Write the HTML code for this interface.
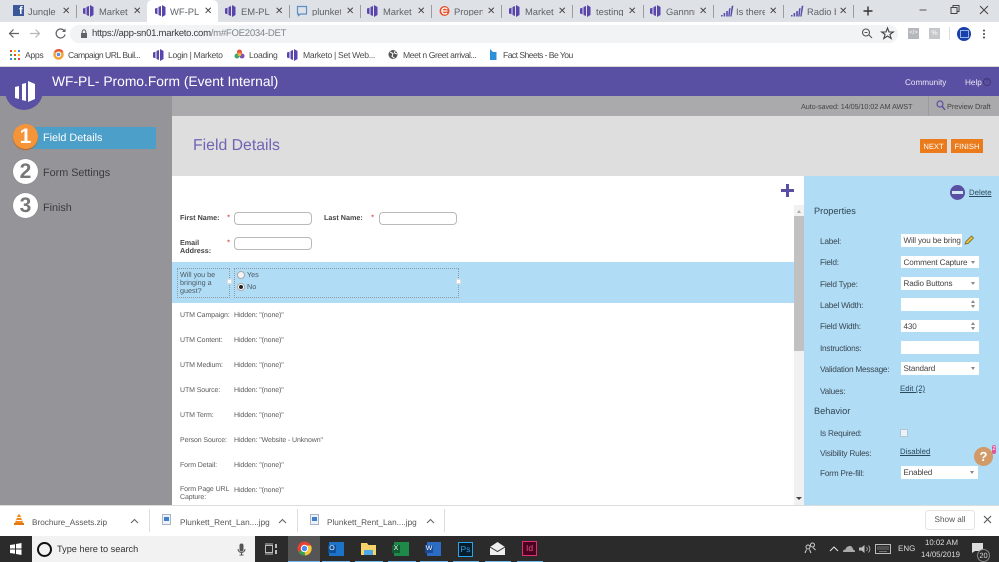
<!DOCTYPE html>
<html><head><meta charset="utf-8"><title>WF-PL- Promo.Form</title>
<style>
html,body{margin:0;padding:0}
body{width:999px;height:562px;position:relative;overflow:hidden;background:#fff;font-family:"Liberation Sans",sans-serif;color:#444;text-rendering:geometricPrecision}
.a,.t{position:absolute}
.t{white-space:nowrap;line-height:1}
.tabtxt{font-size:9.4px;color:#5f6368;top:7px;width:29px;overflow:hidden}
.x{font-size:10px;color:#444;top:7px}
.sep{position:absolute;top:5px;width:1px;height:13px;background:#9a9ca0}
.bm{font-size:8.6px;letter-spacing:-.3px;color:#4a4a4a;top:51px}
.f1{font-size:7.2px;font-weight:bold;color:#444}
.f2{font-size:7px;letter-spacing:-.1px;color:#5a5a5a}
.in{position:absolute;background:#fff;border:1px solid #b9b9b9;border-radius:4px;width:76px;height:11px;box-sizing:content-box}
.pl{font-size:8.300px;letter-spacing:-.25px;color:#3c4a55;left:820px}
.pi{position:absolute;left:900.500px;width:78.500px;height:12.700px;background:#fff;font-size:8.100px;letter-spacing:-.15px;color:#444;line-height:13px;text-indent:3px;white-space:nowrap;overflow:hidden}
.dd:after{content:"";position:absolute;right:4px;top:5px;border-left:2.500px solid transparent;border-right:2.500px solid transparent;border-top:3px solid #888}
.sp:after{content:"";position:absolute;right:4px;top:2px;border-left:2.500px solid transparent;border-right:2.500px solid transparent;border-bottom:3px solid #888}
.sp:before{content:"";position:absolute;right:4px;top:7px;border-left:2.500px solid transparent;border-right:2.500px solid transparent;border-top:3px solid #888}
.lnk{font-size:7.800px;color:#2b4a5e;text-decoration:underline}
.circ{position:absolute;left:13px;width:25px;height:25px;border-radius:50%;background:#fff;box-shadow:0 0 1px #777;color:#777;font-weight:bold;font-size:21px;line-height:25px;text-align:center}
.stp{font-size:10.800px;left:43px;color:#3a3a3a}
.tb{position:absolute;bottom:0;height:1px;background:#76b9ed}
svg{position:absolute;overflow:visible}
</style></head><body>

<!-- tab strip -->
<div class="a" style="left:0;top:0;width:999px;height:22px;background:#dee1e6"></div>
<div class="a" style="left:147px;top:0;width:71px;height:22px;background:#fff;border-radius:5px 5px 0 0"></div>
<div class="a" style="left:13px;top:5px;width:11px;height:11px;background:#3b5998"></div>
<div class="t" style="left:19px;top:6px;font-size:11px;font-weight:bold;color:#fff">f</div>
<svg width="0" height="0"><defs><g id="m"><path d="M0 3.500L2.500 2.700V9.300L0 8.500Z M3.500 2V10L6 11V1Z M7 0V12L10.500 10V2Z" fill="#5a45ad"/></g><g id="s"><path d="M0 10h1.600v1.500H0Z M2.600 8h1.600v3.500H2.600Z M5.200 6h1.600v5.500H5.200Z M8 3.500l1.600-.5-1 8.500H7.200Z M10.700 1l1.700-.5-1.800 11H9.200Z" fill="#5a4fa8"/></g></defs></svg>
<svg style="left:83px;top:5px" width="11" height="12"><use href="#m"/></svg>
<svg style="left:155px;top:5px" width="11" height="12"><use href="#m"/></svg>
<svg style="left:225px;top:5px" width="11" height="12"><use href="#m"/></svg>
<svg style="left:296px;top:5px" width="12" height="12"><path d="M1.500 1.500H10.500V9H4.500L2.500 10.500V9H1.500Z" fill="none" stroke="#5b8fc9" stroke-width="1.200"/></svg>
<svg style="left:367px;top:5px" width="11" height="12"><use href="#m"/></svg>
<svg style="left:439px;top:5px" width="12" height="12"><circle cx="5.500" cy="6" r="5" fill="#e8502a"/><path d="M2.500 6H8.500M8.300 4.300A3 3 0 1 0 8 8" fill="none" stroke="#fff" stroke-width="1.300"/></svg>
<svg style="left:509px;top:5px" width="11" height="12"><use href="#m"/></svg>
<svg style="left:580px;top:5px" width="11" height="12"><use href="#m"/></svg>
<svg style="left:650px;top:5px" width="11" height="12"><use href="#m"/></svg>
<svg style="left:721px;top:5px" width="13" height="12"><use href="#s"/></svg>
<svg style="left:791px;top:5px" width="13" height="12"><use href="#s"/></svg>

<div class="t tabtxt" style="left:28px">Jungle S</div><div class="t x" style="left:62px">✕</div>
<div class="t tabtxt" style="left:99px">Marketo</div><div class="t x" style="left:133px">✕</div>
<div class="t tabtxt" style="left:170px">WF-PL-</div><div class="t x" style="left:204px">✕</div>
<div class="t tabtxt" style="left:241px">EM-PL-2</div><div class="t x" style="left:275px">✕</div>
<div class="t tabtxt" style="left:312px">plunkett</div><div class="t x" style="left:346px">✕</div>
<div class="t tabtxt" style="left:383px">Marketo</div><div class="t x" style="left:417px">✕</div>
<div class="t tabtxt" style="left:454px">Property</div><div class="t x" style="left:487px">✕</div>
<div class="t tabtxt" style="left:525px">Marketo</div><div class="t x" style="left:558px">✕</div>
<div class="t tabtxt" style="left:596px">testing c</div><div class="t x" style="left:628px">✕</div>
<div class="t tabtxt" style="left:666px">Gannnn</div><div class="t x" style="left:699px">✕</div>
<div class="t tabtxt" style="left:736px">Is there</div><div class="t x" style="left:769px">✕</div>
<div class="t tabtxt" style="left:807px">Radio bu</div><div class="t x" style="left:839px">✕</div>
<div class="sep" style="left:76px"></div><div class="sep" style="left:289px"></div><div class="sep" style="left:360px"></div><div class="sep" style="left:431px"></div><div class="sep" style="left:501px"></div><div class="sep" style="left:572px"></div><div class="sep" style="left:643px"></div><div class="sep" style="left:713px"></div><div class="sep" style="left:783px"></div><div class="sep" style="left:853px"></div>
<svg style="left:862px;top:5px" width="12" height="12"><path d="M6 1.500V10.500M1.500 6H10.500" stroke="#333" stroke-width="1.400"/></svg>
<svg style="left:920px;top:4px" width="70" height="14"><path d="M-.5 6H6.500" stroke="#555"/><path d="M31 3.500H37V9.500H31ZM33 3.500V1.500H39V7.500H37" fill="none" stroke="#444"/><path d="M60 2L68 10M68 2L60 10" stroke="#444"/></svg>

<!-- address bar -->
<div class="a" style="left:70px;top:25px;width:828px;height:18px;border-radius:9px;background:#f1f3f4"></div>
<svg style="left:8px;top:27px" width="60" height="13"><path d="M11 6.500H1.500M5.500 2.500L1.500 6.500L5.500 10.500" fill="none" stroke="#5f6368" stroke-width="1.200"/><path d="M29 6.500H38.500M34.500 2.500L38.500 6.500L34.500 10.500" fill="none" stroke="#b5b7ba" stroke-width="1.200" transform="translate(-7 0)"/><path d="M56 3.500A4.500 4.500 0 1 0 57 7.500" fill="none" stroke="#5f6368" stroke-width="1.200"/><path d="M57.500 1.500V5H54Z" fill="#5f6368"/></svg>
<svg style="left:80px;top:29px" width="8" height="10"><rect x="1" y="4" width="6" height="5" fill="#5f6368"/><path d="M2.200 4V2.700A1.800 1.800 0 0 1 5.800 2.700V4" fill="none" stroke="#5f6368"/></svg>
<div class="t" style="left:92px;top:29px;font-size:9.600px;letter-spacing:-.29px;color:#3c4043">https://app-sn01.marketo.com<span style="color:#80868b">/m#FOE2034-DET</span></div>
<svg style="left:861px;top:27px" width="35" height="13"><circle cx="5" cy="5.500" r="3.500" fill="none" stroke="#555" stroke-width="1.100"/><path d="M8 8L11 11M3.500 5.500H6.500" stroke="#555" stroke-width="1.100"/><path d="M26.500 1L28 5H32.300L28.900 7.500L30.200 11.500L26.500 9L22.800 11.500L24.100 7.500L20.700 5H25Z" fill="none" stroke="#444" stroke-width="1.100"/></svg>
<div class="a" style="left:908px;top:28px;width:11px;height:11px;background:#b4b7bb;color:#fff;font-size:6px;line-height:11px;text-align:center">&lt;/&gt;</div>
<div class="a" style="left:929px;top:28px;width:11px;height:11px;background:#c5c7ca;color:#fff;font-size:7px;line-height:11px;text-align:center">%</div>
<div class="a" style="left:949px;top:27px;width:1px;height:13px;background:#dadce0"></div>
<div class="a" style="left:957px;top:27px;width:14px;height:14px;border-radius:50%;background:#1b3fa8"></div>
<div class="a" style="left:960px;top:30px;width:7px;height:6px;border:1px solid #8fb4e8"></div>
<svg style="left:982px;top:29px" width="4" height="11"><circle cx="2" cy="1.500" r="1" fill="#444"/><circle cx="2" cy="5" r="1" fill="#444"/><circle cx="2" cy="8.500" r="1" fill="#444"/></svg>

<!-- bookmarks -->
<svg style="left:10px;top:50px" width="10" height="10"><g><rect x="0" y="0" width="2" height="2" fill="#ea4335"/><rect x="4" y="0" width="2" height="2" fill="#fbbc05"/><rect x="8" y="0" width="2" height="2" fill="#4285f4"/><rect x="0" y="4" width="2" height="2" fill="#34a853"/><rect x="4" y="4" width="2" height="2" fill="#ea4335"/><rect x="8" y="4" width="2" height="2" fill="#fbbc05"/><rect x="0" y="8" width="2" height="2" fill="#4285f4"/><rect x="4" y="8" width="2" height="2" fill="#34a853"/><rect x="8" y="8" width="2" height="2" fill="#ea4335"/></g></svg>
<div class="t bm" style="left:25px">Apps</div>
<svg style="left:53px;top:49px" width="11" height="11"><circle cx="5.500" cy="5.500" r="4" fill="#fff" stroke="#f2a33a" stroke-width="2.500"/><path d="M2 3A4.500 4.500 0 0 1 9.500 3" fill="none" stroke="#e8553d" stroke-width="2"/><circle cx="5.500" cy="5.500" r="1.800" fill="#5b8de8"/></svg>
<div class="t bm" style="left:68px;letter-spacing:-.5px">Campaign URL Buil...</div>
<svg style="left:153px;top:49px" width="11" height="12"><use href="#m"/></svg>
<div class="t bm" style="left:168px">Login | Marketo</div>
<svg style="left:234px;top:49px" width="11" height="11"><circle cx="5.500" cy="3" r="2.500" fill="#e8553d"/><circle cx="3" cy="7" r="2.500" fill="#3aa76d"/><circle cx="8" cy="7" r="2.500" fill="#7b4fb5"/><circle cx="5.500" cy="5.500" r="1.800" fill="#f3b13c"/></svg>
<div class="t bm" style="left:249px">Loading</div>
<svg style="left:287px;top:49px" width="11" height="12"><use href="#m"/></svg>
<div class="t bm" style="left:303px">Marketo | Set Web...</div>
<svg style="left:388px;top:49px" width="11" height="11"><circle cx="5" cy="5.500" r="4.500" fill="#555"/><path d="M2 3L5 4.500 4 7.500 6.500 9M7 2L6.500 4 9 5" fill="none" stroke="#fff"/></svg>
<div class="t bm" style="left:403px;letter-spacing:-.42px">Meet n Greet arrival...</div>
<svg style="left:489px;top:49px" width="9" height="12"><path d="M1 0L4 3H7.500V11H1Z" fill="#2b90d9"/></svg>
<div class="t bm" style="left:503px;letter-spacing:-.55px">Fact Sheets - Be You</div>
<div class="a" style="left:0;top:66px;width:999px;height:1px;background:#d8d8d8"></div>

<!-- app header -->
<div class="a" style="left:0;top:67px;width:999px;height:29px;background:#5a50a3"></div>
<div class="a" style="left:0;top:96px;width:172px;height:409px;background:#959499"></div>
<div class="a" style="left:172px;top:96px;width:827px;height:20px;background:#aaaaad"></div>
<div class="a" style="left:5px;top:72px;width:38px;height:38px;border-radius:50%;background:#5a50a3"></div>
<svg style="left:15px;top:81px" width="20" height="21"><path d="M0 6L4 5V18L0 17Z M7 3L11 2V20L7 19Z M13 0L20 3V18L13 21Z" fill="#fff"/></svg>
<div class="t" style="left:52px;top:75px;font-size:13.800px;color:#fff">WF-PL- Promo.Form (Event Internal)</div>
<div class="t" style="left:905px;top:78.500px;font-size:8.200px;color:#e8e6f5">Community</div>
<div class="t" style="left:965px;top:78.500px;font-size:8.200px;color:#e8e6f5">Help</div>
<div class="a" style="left:983px;top:78px;width:6px;height:6px;border:1px solid #3f3a75;border-radius:50%;font-size:6px;line-height:6px;text-align:center;color:#3f3a75">?</div>
<div class="t" style="left:801px;top:103px;font-size:7.300px;letter-spacing:-.1px;color:#444">Auto-saved: 14/05/10:02 AM AWST</div>
<div class="a" style="left:928px;top:96px;width:1px;height:20px;background:#9c9c9f"></div>
<svg style="left:936px;top:100px" width="10" height="11"><circle cx="4" cy="4" r="3" fill="none" stroke="#5a50a3" stroke-width="1.200"/><path d="M6.200 6.500L9 9.800" stroke="#5a50a3" stroke-width="1.500"/></svg>
<div class="t" style="left:947px;top:103px;font-size:7.400px;letter-spacing:-.05px;color:#444">Preview Draft</div>

<!-- sidebar -->
<div class="a" style="left:26px;top:127px;width:130px;height:22px;background:#4c9fc8"></div>
<div class="circ" style="top:124px;background:#f6943a;color:#fff;box-shadow:0 1px 1px #b5651d">1</div>
<div class="t stp" style="top:133px;color:#fff">Field Details</div>
<div class="circ" style="top:159px">2</div>
<div class="t stp" style="top:168px">Form Settings</div>
<div class="circ" style="top:193px">3</div>
<div class="t stp" style="top:203px">Finish</div>

<!-- title -->
<div class="a" style="left:172px;top:116px;width:827px;height:60px;background:#dedede"></div>
<div class="t" style="left:193px;top:138px;font-size:15.800px;color:#7064b5">Field Details</div>
<div class="a" style="left:920px;top:139px;width:27px;height:14px;background:#ea7a1a;color:#fff;font-size:7.600px;line-height:15px;text-align:center">NEXT</div>
<div class="a" style="left:951px;top:139px;width:32px;height:14px;background:#ea7a1a;color:#fff;font-size:7.600px;line-height:15px;text-align:center">FINISH</div>

<!-- form -->
<div class="a" style="left:172px;top:176px;width:632px;height:329px;background:#fff"></div>
<svg style="left:781px;top:184px" width="13" height="13"><path d="M6.500 0V13M0 6.500H13" stroke="#5a50a3" stroke-width="3"/></svg>
<div class="a" style="left:794px;top:205px;width:10px;height:300px;background:#f1f1f1"></div>
<div class="a" style="left:794px;top:216px;width:10px;height:135px;background:#c1c1c1"></div>
<div class="a" style="left:797px;top:210px;border-left:2.500px solid transparent;border-right:2.500px solid transparent;border-bottom:3px solid #aaa"></div>
<div class="a" style="left:796px;top:497px;border-left:3px solid transparent;border-right:3px solid transparent;border-top:3px solid #444"></div>

<div class="t f1" style="left:180px;top:214px">First Name:</div>
<div class="t" style="left:227px;top:214px;font-size:8px;color:#d33">*</div>
<div class="in" style="left:234px;top:211.500px"></div>
<div class="t f1" style="left:324px;top:214px">Last Name:</div>
<div class="t" style="left:371px;top:214px;font-size:8px;color:#d33">*</div>
<div class="in" style="left:379px;top:211.500px"></div>
<div class="t f1" style="left:180px;top:239px;line-height:8px">Email<br>Address:</div>
<div class="t" style="left:227px;top:239px;font-size:8px;color:#d33">*</div>
<div class="in" style="left:234px;top:236.500px"></div>

<div class="a" style="left:172px;top:262px;width:622px;height:41px;background:#b0dcf5"></div>
<div class="a" style="left:177px;top:268px;width:51px;height:28px;border:1px dotted #8d9aa3"></div>
<div class="a" style="left:234px;top:268px;width:223px;height:28px;border:1px dotted #8d9aa3"></div>
<div class="t" style="left:180px;top:271px;font-size:7.200px;line-height:8px;color:#4d5a63">Will you be<br>bringing a<br>guest?</div>
<div class="a" style="left:227px;top:279px;width:3px;height:3px;background:#fff;border:1px solid #ddd"></div>
<div class="a" style="left:456px;top:279px;width:3px;height:3px;background:#fff;border:1px solid #ddd"></div>
<div class="a" style="left:237px;top:271px;width:6px;height:6px;border-radius:50%;background:#f4f4f4;border:1px solid #aaa"></div>
<div class="t" style="left:247px;top:271px;font-size:7.200px;color:#4d5a63">Yes</div>
<div class="a" style="left:237px;top:283px;width:6px;height:6px;border-radius:50%;background:#fff;border:1px solid #aaa"></div>
<div class="a" style="left:239px;top:285px;width:4px;height:4px;border-radius:50%;background:#222"></div>
<div class="t" style="left:247px;top:283px;font-size:7.200px;color:#4d5a63">No</div>

<div class="t f2" style="left:180px;top:312px">UTM Campaign:</div><div class="t f2" style="left:234px;top:312px">Hidden: "(none)"</div>
<div class="t f2" style="left:180px;top:337px">UTM Content:</div><div class="t f2" style="left:234px;top:337px">Hidden: "(none)"</div>
<div class="t f2" style="left:180px;top:362px">UTM Medium:</div><div class="t f2" style="left:234px;top:362px">Hidden: "(none)"</div>
<div class="t f2" style="left:180px;top:387px">UTM Source:</div><div class="t f2" style="left:234px;top:387px">Hidden: "(none)"</div>
<div class="t f2" style="left:180px;top:412px">UTM Term:</div><div class="t f2" style="left:234px;top:412px">Hidden: "(none)"</div>
<div class="t f2" style="left:180px;top:437px">Person Source:</div><div class="t f2" style="left:234px;top:437px">Hidden: "Website - Unknown"</div>
<div class="t f2" style="left:180px;top:462px">Form Detail:</div><div class="t f2" style="left:234px;top:462px">Hidden: "(none)"</div>
<div class="t f2" style="left:180px;top:486px;line-height:8px">Form Page URL<br>Capture:</div><div class="t f2" style="left:234px;top:487px">Hidden: "(none)"</div>

<!-- right panel -->
<div class="a" style="left:804px;top:176px;width:195px;height:329px;background:#b0dcf5"></div>
<div class="a" style="left:950px;top:185px;width:15px;height:15px;border-radius:50%;background:#5a50a3"></div>
<div class="a" style="left:952px;top:191px;width:11px;height:3px;background:#cfe6f5"></div>
<div class="t lnk" style="left:969px;top:189px">Delete</div>
<div class="t" style="left:814px;top:207px;font-size:9.200px;color:#2f4552">Properties</div>
<div class="t pl" style="top:237px">Label:</div>
<div class="pi" style="top:234px;width:61.500px">Will you be bring</div>
<svg style="left:964px;top:235px" width="10" height="10"><path d="M1 9L2 6.500 7.500 1 9.500 3 4 8.500Z" fill="#e8c23a" stroke="#6b5b1e" stroke-width=".7"/></svg>
<div class="t pl" style="top:258px">Field:</div>
<div class="pi dd" style="top:255.500px">Comment Capture</div>
<div class="t pl" style="top:280px">Field Type:</div>
<div class="pi dd" style="top:277px">Radio Buttons</div>
<div class="t pl" style="top:301px">Label Width:</div>
<div class="pi sp" style="top:298px"></div>
<div class="t pl" style="top:322px">Field Width:</div>
<div class="pi sp" style="top:319.500px">430</div>
<div class="t pl" style="top:344px">Instructions:</div>
<div class="pi" style="top:341px"></div>
<div class="t pl" style="top:365px">Validation Message:</div>
<div class="pi dd" style="top:362px">Standard</div>
<div class="t pl" style="top:387px">Values:</div>
<div class="t lnk" style="left:900px;top:385px">Edit (2)</div>
<div class="t" style="left:814px;top:407px;font-size:9.200px;color:#2f4552">Behavior</div>
<div class="t pl" style="top:429px">Is Required:</div>
<div class="a" style="left:900px;top:429px;width:6px;height:6px;background:#e8f3fa;border:1px solid #b5c5cf;border-radius:1px"></div>
<div class="t pl" style="top:449px">Visibility Rules:</div>
<div class="t lnk" style="left:900px;top:448px">Disabled</div>
<div class="t pl" style="top:469px">Form Pre-fill:</div>
<div class="pi dd" style="top:466px;width:77px">Enabled</div>
<div class="a" style="left:974px;top:447px;width:19px;height:19px;border-radius:50%;background:#d19a68;color:#fff;font-weight:bold;font-size:13px;line-height:19px;text-align:center">?</div>
<div class="a" style="left:992px;top:445px;width:4px;height:9px;border-radius:2px;background:#e0569b;color:#fff;font-size:6px;line-height:9px;text-align:center">2</div>

<!-- downloads -->
<div class="a" style="left:0;top:505px;width:999px;height:31px;background:#fff;border-top:1px solid #dcdcdc;box-sizing:border-box"></div>
<svg style="left:13px;top:514px" width="12" height="12"><path d="M5 0.500H7L10 9H2Z" fill="#f08a1d"/><path d="M4.200 3.500H7.800M3.300 6.500H8.700" stroke="#fff"/><rect x="1" y="9" width="10" height="2" fill="#e07a10"/></svg>
<div class="t" style="left:32px;top:519px;font-size:8.200px;color:#555">Brochure_Assets.zip</div>
<svg style="left:130px;top:518px" width="9" height="6"><path d="M1 5L4.500 1.500L8 5" fill="none" stroke="#666" stroke-width="1.100"/></svg>
<div class="a" style="left:149px;top:509px;width:1px;height:23px;background:#dcdcdc"></div>
<svg style="left:162px;top:514px" width="9" height="12"><path d="M.5.500H8.500V10.500H.5Z" fill="#eef2f8" stroke="#aab4c5"/><rect x="2" y="3" width="5" height="4" fill="#3f7fd0"/></svg>
<div class="t" style="left:180px;top:519px;font-size:8.200px;color:#555">Plunkett_Rent_Lan....jpg</div>
<svg style="left:278px;top:518px" width="9" height="6"><path d="M1 5L4.500 1.500L8 5" fill="none" stroke="#666" stroke-width="1.100"/></svg>
<div class="a" style="left:297px;top:509px;width:1px;height:23px;background:#dcdcdc"></div>
<svg style="left:310px;top:514px" width="9" height="12"><path d="M.5.500H8.500V10.500H.5Z" fill="#eef2f8" stroke="#aab4c5"/><rect x="2" y="3" width="5" height="4" fill="#3f7fd0"/></svg>
<div class="t" style="left:327px;top:519px;font-size:8.200px;color:#555">Plunkett_Rent_Lan....jpg</div>
<svg style="left:426px;top:518px" width="9" height="6"><path d="M1 5L4.500 1.500L8 5" fill="none" stroke="#666" stroke-width="1.100"/></svg>
<div class="a" style="left:444px;top:509px;width:1px;height:23px;background:#dcdcdc"></div>
<div class="a" style="left:925px;top:510px;width:50px;height:20px;box-sizing:border-box;border:1px solid #e3e3e3;border-radius:3px;background:#fff;color:#555;font-size:8.200px;line-height:18px;text-align:center">Show all</div>
<svg style="left:983px;top:515px" width="9" height="9"><path d="M1 1L8 8M8 1L1 8" stroke="#555" stroke-width="1.100"/></svg>

<!-- taskbar -->
<div class="a" style="left:0;top:536px;width:999px;height:26px;background:#2b2b2b"></div>
<svg style="left:10px;top:543px" width="12" height="12"><path d="M0 2L5 1.200V5.500H0ZM6 1L11.500 0V5.500H6ZM0 6.500H5V10.800L0 10ZM6 6.500H11.500V12L6 11Z" fill="#fff"/></svg>
<div class="a" style="left:32px;top:536px;width:223px;height:26px;background:#f2f2f2"></div>
<div class="a" style="left:37px;top:542px;width:11px;height:11px;border:2px solid #111;border-radius:50%"></div>
<div class="t" style="left:57px;top:545px;font-size:9.200px;color:#333">Type here to search</div>
<svg style="left:237px;top:543px" width="9" height="13"><rect x="2.500" y="0.500" width="4" height="8" rx="2" fill="#555"/><path d="M1 6A3.500 3.500 0 0 0 8 6M4.500 9.500V12M2.500 12H6.500" fill="none" stroke="#555"/></svg>
<svg style="left:265px;top:544px" width="12" height="10"><path d="M.5 1.500H7.500V8.500H.5ZM0 0H8M0 10H8" fill="none" stroke="#bbb"/><path d="M10 0H12V4H10ZM10 6H12V10H10Z" fill="#bbb"/></svg>
<div class="a" style="left:288px;top:536px;width:32px;height:26px;background:#555"></div>
<svg style="left:297px;top:541px" width="15" height="15"><circle cx="7.500" cy="7.500" r="7" fill="#e34133"/><path d="M7.500 7.500L1.500 11A7 7 0 0 0 11 13.500Z" fill="#2fa350"/><path d="M7.500 4.500H14A7 7 0 0 1 8 14.500Z" fill="#f8c43a"/><circle cx="7.500" cy="7.500" r="3.200" fill="#4a8af0" stroke="#fff"/></svg>
<div class="a" style="left:329px;top:542px;width:15px;height:14px;background:#1b74c8"></div>
<div class="a" style="left:328px;top:545px;width:8px;height:8px;background:#0e4f96;color:#fff;font-size:7px;line-height:8px;text-align:center">O</div>
<svg style="left:361px;top:542px" width="15" height="14"><path d="M0 1H6L7.500 3H15V13H0Z" fill="#f5d36a"/><rect x="3" y="8" width="9" height="5" fill="#4ea7e6"/></svg>
<div class="a" style="left:394px;top:542px;width:15px;height:14px;background:#1e8a4a"></div>
<div class="a" style="left:392px;top:545px;width:8px;height:8px;background:#125c31;color:#fff;font-size:7px;line-height:8px;text-align:center">X</div>
<div class="a" style="left:427px;top:542px;width:14px;height:14px;background:#2c6cc4"></div>
<div class="a" style="left:425px;top:545px;width:8px;height:8px;background:#1a4a96;color:#fff;font-size:7px;line-height:8px;text-align:center">W</div>
<div class="a" style="left:458px;top:542px;width:13px;height:13px;background:#071d2c;border:1px solid #2fa3e8;color:#2fa3e8;font-size:8.500px;line-height:13px;text-align:center">Ps</div>
<svg style="left:490px;top:542px" width="15" height="14"><path d="M0 5L7.500 0 15 5V13H0Z" fill="#eee"/><path d="M0 5L7.500 9.500 15 5" fill="none" stroke="#333"/></svg>
<div class="a" style="left:522px;top:541px;width:13px;height:13px;background:#49021f;border:1px solid #e0306f;color:#ee4d88;font-size:8.500px;line-height:13px;text-align:center">Id</div>
<div class="tb" style="left:288px;width:32px;height:1.500px"></div><div class="tb" style="left:322px;width:28px;height:1.500px"></div><div class="tb" style="left:355px;width:28px;height:1.500px"></div><div class="tb" style="left:388px;width:28px;height:1.500px"></div><div class="tb" style="left:420px;width:28px;height:1.500px"></div><div class="tb" style="left:453px;width:26px;height:1.500px"></div><div class="tb" style="left:485px;width:26px;height:1.500px"></div><div class="tb" style="left:517px;width:26px;height:1.500px"></div>
<svg style="left:804px;top:542px" width="12" height="12"><circle cx="4" cy="5" r="2" fill="none" stroke="#ccc"/><circle cx="8.500" cy="3" r="2" fill="none" stroke="#ccc"/><path d="M1 11L2.500 7.500M5.500 7.500L7 11M9 5.500L11.500 8" stroke="#ccc"/></svg>
<svg style="left:829px;top:546px" width="10" height="6"><path d="M1 5L5 1L9 5" fill="none" stroke="#ddd" stroke-width="1.100"/></svg>
<svg style="left:843px;top:545px" width="12" height="8"><path d="M0 7C0 5 1 4.500 2.500 4.500 3 2 5 1 7 1 9 1 10 3 10 4.500 11.500 4.500 12 6 12 7Z" fill="#aaa"/></svg>
<svg style="left:859px;top:544px" width="12" height="10"><path d="M0 3.500H2.500L5.500 1V9L2.500 6.500H0Z" fill="#bbb"/><path d="M7.500 3A3 3 0 0 1 7.500 7M9.500 1.500A5 5 0 0 1 9.500 8.500" fill="none" stroke="#bbb" stroke-width=".8"/></svg>
<svg style="left:875px;top:544px" width="16" height="11"><rect x=".5" y=".5" width="15" height="9" fill="none" stroke="#bbb"/><path d="M2.500 3H13.500M2.500 5H13.500M4.500 7.500H11.500" stroke="#bbb" stroke-dasharray="1 1"/></svg>
<div class="t" style="left:898px;top:545px;font-size:8px;color:#ddd">ENG</div>
<div class="t" style="left:925px;top:539px;font-size:7.800px;color:#ddd">10:02 AM</div>
<div class="t" style="left:921px;top:551px;font-size:7.800px;color:#ddd">14/05/2019</div>
<svg style="left:972px;top:543px" width="12" height="10"><path d="M0 0H11V8H3L0 10Z" fill="#ddd"/></svg>
<div class="a" style="left:977px;top:549px;width:11px;height:11px;border-radius:50%;background:#2b2b2b;border:1px solid #888;color:#ddd;font-size:7.500px;line-height:11px;text-align:center">20</div>
</body></html>
